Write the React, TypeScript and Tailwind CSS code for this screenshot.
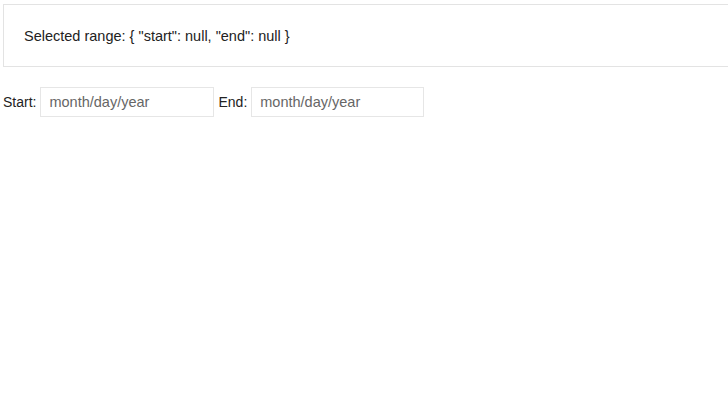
import React from 'react';

export default function App() {
  return (
    <div className="min-h-[416px] bg-white pl-[3px] pt-[4px] text-[14px] text-[#222] font-['Liberation_Sans',Arial,sans-serif]">
      <div className="w-[740px] h-[63px] border border-[#e3e3e3] pl-[20px] pt-[21px] text-[14.5px]">
        Selected range: {'{ "start": null, "end": null }'}
      </div>
      <div className="mt-[20px] flex items-center">
        <label className="mr-[4px]">Start:</label>
        <input
          type="text"
          placeholder="month/day/year"
          className="w-[174px] h-[30px] border border-[#e6e6e6] px-[8px] text-[14.5px] placeholder:text-[#666] outline-none"
        />
        <label className="ml-[4px] mr-[4px]">End:</label>
        <input
          type="text"
          placeholder="month/day/year"
          className="w-[173px] h-[30px] border border-[#e6e6e6] px-[8px] text-[14.5px] placeholder:text-[#666] outline-none"
        />
      </div>
    </div>
  );
}
